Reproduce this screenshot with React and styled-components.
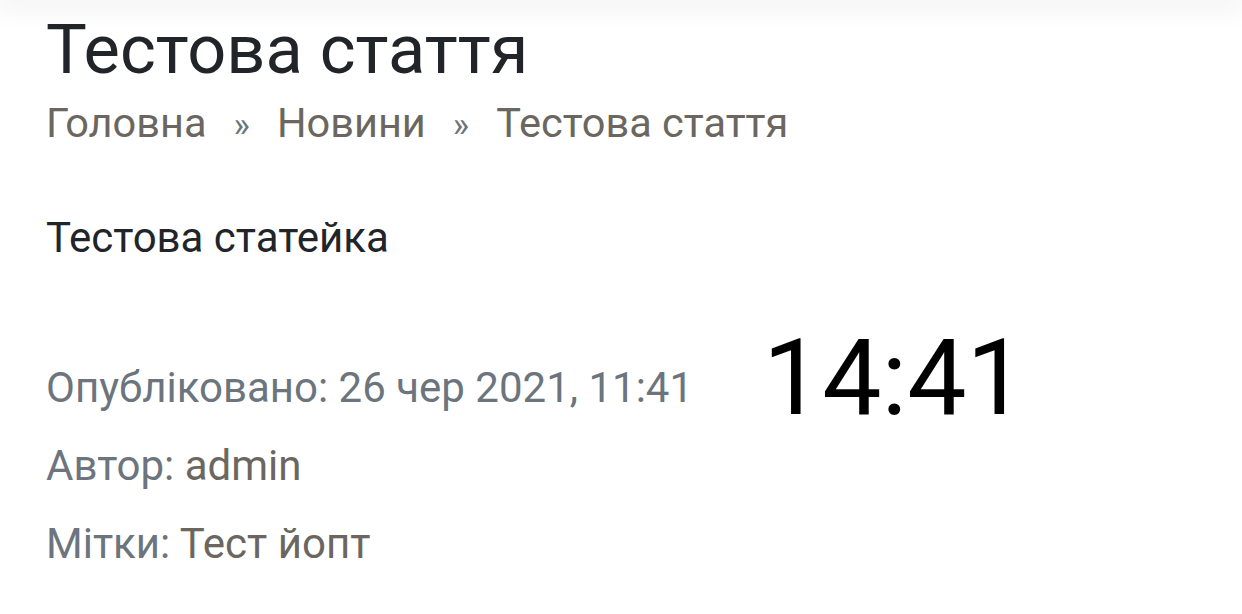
import React from "react";
import styled, { createGlobalStyle } from "styled-components";

const Global = createGlobalStyle`
  html, body { margin: 0; padding: 0; background: #fff; }
  body { font-family: Roboto, "Noto Sans", sans-serif; overflow: hidden; }
`;

const TopBar = styled.header`
  height: 0;
  box-shadow: 0 0 28px 6px rgba(0, 0, 0, 0.09);
`;

const Main = styled.main`
  padding: 9px 46px 0 46px;
`;

const Title = styled.h1`
  margin: 0;
  font-size: 68.5px;
  font-weight: 400;
  line-height: 82px;
  color: #212529;
`;

const Crumbs = styled.nav`
  display: flex;
  align-items: baseline;
  gap: 27px;
  font-size: 41.5px;
  line-height: 60px;
  margin-top: 2px;
`;

const Crumb = styled.span`
  color: #6b6760;
`;

const Sep = styled.span`
  color: #6c757d;
  font-size: 35px;
`;

const Body = styled.p`
  margin: 52px 0 0 0;
  font-size: 42px;
  line-height: 60px;
  color: #212529;
`;

const Meta = styled.div`
  margin-top: 80px;
  display: flex;
  flex-direction: column;
  gap: 18px;
`;

const MetaRow = styled.div`
  display: flex;
  align-items: flex-end;
  gap: 70px;
  font-size: 42px;
  line-height: 60px;
`;

const Label = styled.span`
  color: #6c757d;
`;

const Value = styled.span`
  color: ${(p) => (p.$muted ? "#6c757d" : "#6b6760")};
`;

const Clock = styled.span`
  font-family: Roboto, sans-serif;
  font-size: 105.5px;
  line-height: 60px;
  margin-bottom: 10px;
  color: #000;
`;

export default function App() {
  return (
    <>
      <Global />
      <TopBar />
      <Main>
        <Title>Тестова стаття</Title>
        <Crumbs>
          <Crumb>Головна</Crumb>
          <Sep>»</Sep>
          <Crumb>Новини</Crumb>
          <Sep>»</Sep>
          <Crumb>Тестова стаття</Crumb>
        </Crumbs>
        <Body>Тестова статейка</Body>
        <Meta>
          <MetaRow>
            <Label>
              Опубліковано: <Value $muted>26 чер 2021, 11:41</Value>
            </Label>
            <Clock>14:41</Clock>
          </MetaRow>
          <MetaRow>
            <span>
              <Label>Автор: </Label>
              <Value>admin</Value>
            </span>
          </MetaRow>
          <MetaRow>
            <span>
              <Label>Мітки: </Label>
              <Value>Тест йопт</Value>
            </span>
          </MetaRow>
        </Meta>
      </Main>
    </>
  );
}
